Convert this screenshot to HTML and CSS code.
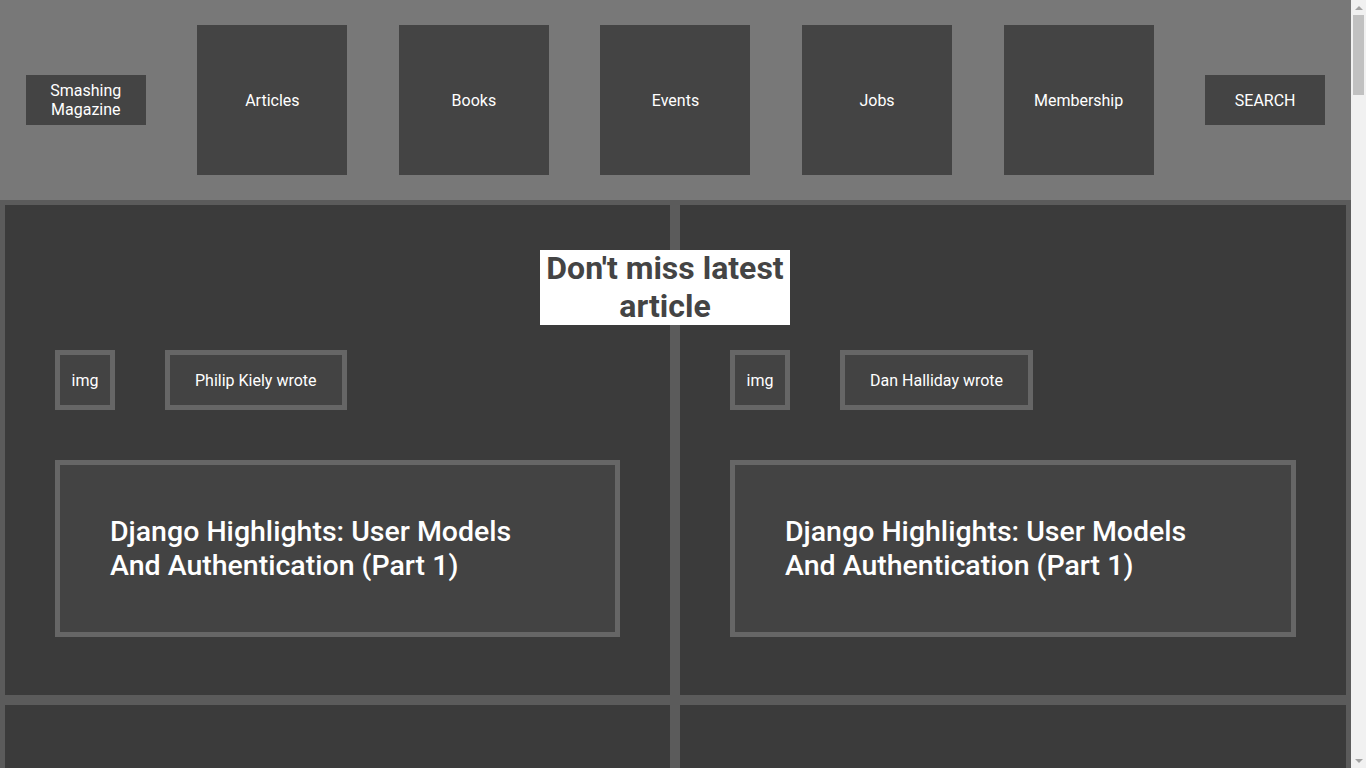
FILE: index.html
```html
<!DOCTYPE html>
<html lang="en">
<head>
<meta charset="utf-8">
<title>Smashing Magazine</title>
<link rel="stylesheet" href="styles.css">
</head>
<body>
<header class="site-header">
  <div class="logo">Smashing Magazine</div>
  <a class="nav-item" href="#">Articles</a>
  <a class="nav-item" href="#">Books</a>
  <a class="nav-item" href="#">Events</a>
  <a class="nav-item" href="#">Jobs</a>
  <a class="nav-item" href="#">Membership</a>
  <div class="search">SEARCH</div>
</header>
<main class="articles">
  <h1 class="headline">Don't miss latest article</h1>
  <article class="card"><div class="meta"><div class="avatar">img</div><div class="author">Philip Kiely wrote</div></div><div class="title-box"><h2 class="title">Django Highlights: User Models And Authentication (Part 1)</h2></div></article>
  <article class="card"><div class="meta"><div class="avatar">img</div><div class="author">Dan Halliday wrote</div></div><div class="title-box"><h2 class="title">Django Highlights: User Models And Authentication (Part 1)</h2></div></article>
  <article class="card"><div class="meta"><div class="avatar">img</div><div class="author">Philip Kiely wrote</div></div><div class="title-box"><h2 class="title">Django Highlights: User Models And Authentication (Part 1)</h2></div></article>
  <article class="card"><div class="meta"><div class="avatar">img</div><div class="author">Dan Halliday wrote</div></div><div class="title-box"><h2 class="title">Django Highlights: User Models And Authentication (Part 1)</h2></div></article>
  <article class="card"><div class="meta"><div class="avatar">img</div><div class="author">Philip Kiely wrote</div></div><div class="title-box"><h2 class="title">Django Highlights: User Models And Authentication (Part 1)</h2></div></article>
  <article class="card"><div class="meta"><div class="avatar">img</div><div class="author">Dan Halliday wrote</div></div><div class="title-box"><h2 class="title">Django Highlights: User Models And Authentication (Part 1)</h2></div></article>
  <article class="card"><div class="meta"><div class="avatar">img</div><div class="author">Philip Kiely wrote</div></div><div class="title-box"><h2 class="title">Django Highlights: User Models And Authentication (Part 1)</h2></div></article>
  <article class="card"><div class="meta"><div class="avatar">img</div><div class="author">Dan Halliday wrote</div></div><div class="title-box"><h2 class="title">Django Highlights: User Models And Authentication (Part 1)</h2></div></article>
  <article class="card"><div class="meta"><div class="avatar">img</div><div class="author">Philip Kiely wrote</div></div><div class="title-box"><h2 class="title">Django Highlights: User Models And Authentication (Part 1)</h2></div></article>
  <article class="card"><div class="meta"><div class="avatar">img</div><div class="author">Dan Halliday wrote</div></div><div class="title-box"><h2 class="title">Django Highlights: User Models And Authentication (Part 1)</h2></div></article>
  <article class="card"><div class="meta"><div class="avatar">img</div><div class="author">Philip Kiely wrote</div></div><div class="title-box"><h2 class="title">Django Highlights: User Models And Authentication (Part 1)</h2></div></article>
  <article class="card"><div class="meta"><div class="avatar">img</div><div class="author">Dan Halliday wrote</div></div><div class="title-box"><h2 class="title">Django Highlights: User Models And Authentication (Part 1)</h2></div></article>
  <article class="card"><div class="meta"><div class="avatar">img</div><div class="author">Philip Kiely wrote</div></div><div class="title-box"><h2 class="title">Django Highlights: User Models And Authentication (Part 1)</h2></div></article>
  <article class="card"><div class="meta"><div class="avatar">img</div><div class="author">Dan Halliday wrote</div></div><div class="title-box"><h2 class="title">Django Highlights: User Models And Authentication (Part 1)</h2></div></article>
  <article class="card"><div class="meta"><div class="avatar">img</div><div class="author">Philip Kiely wrote</div></div><div class="title-box"><h2 class="title">Django Highlights: User Models And Authentication (Part 1)</h2></div></article>
  <article class="card"><div class="meta"><div class="avatar">img</div><div class="author">Dan Halliday wrote</div></div><div class="title-box"><h2 class="title">Django Highlights: User Models And Authentication (Part 1)</h2></div></article>
  <article class="card"><div class="meta"><div class="avatar">img</div><div class="author">Philip Kiely wrote</div></div><div class="title-box"><h2 class="title">Django Highlights: User Models And Authentication (Part 1)</h2></div></article>
  <article class="card"><div class="meta"><div class="avatar">img</div><div class="author">Dan Halliday wrote</div></div><div class="title-box"><h2 class="title">Django Highlights: User Models And Authentication (Part 1)</h2></div></article>
  <article class="card"><div class="meta"><div class="avatar">img</div><div class="author">Philip Kiely wrote</div></div><div class="title-box"><h2 class="title">Django Highlights: User Models And Authentication (Part 1)</h2></div></article>
  <article class="card"><div class="meta"><div class="avatar">img</div><div class="author">Dan Halliday wrote</div></div><div class="title-box"><h2 class="title">Django Highlights: User Models And Authentication (Part 1)</h2></div></article>
  <article class="card"><div class="meta"><div class="avatar">img</div><div class="author">Philip Kiely wrote</div></div><div class="title-box"><h2 class="title">Django Highlights: User Models And Authentication (Part 1)</h2></div></article>
  <article class="card"><div class="meta"><div class="avatar">img</div><div class="author">Dan Halliday wrote</div></div><div class="title-box"><h2 class="title">Django Highlights: User Models And Authentication (Part 1)</h2></div></article>
  <article class="card"><div class="meta"><div class="avatar">img</div><div class="author">Philip Kiely wrote</div></div><div class="title-box"><h2 class="title">Django Highlights: User Models And Authentication (Part 1)</h2></div></article>
  <article class="card"><div class="meta"><div class="avatar">img</div><div class="author">Dan Halliday wrote</div></div><div class="title-box"><h2 class="title">Django Highlights: User Models And Authentication (Part 1)</h2></div></article>
  <article class="card"><div class="meta"><div class="avatar">img</div><div class="author">Philip Kiely wrote</div></div><div class="title-box"><h2 class="title">Django Highlights: User Models And Authentication (Part 1)</h2></div></article>
  <article class="card"><div class="meta"><div class="avatar">img</div><div class="author">Dan Halliday wrote</div></div><div class="title-box"><h2 class="title">Django Highlights: User Models And Authentication (Part 1)</h2></div></article>
  <article class="card"><div class="meta"><div class="avatar">img</div><div class="author">Philip Kiely wrote</div></div><div class="title-box"><h2 class="title">Django Highlights: User Models And Authentication (Part 1)</h2></div></article>
  <article class="card"><div class="meta"><div class="avatar">img</div><div class="author">Dan Halliday wrote</div></div><div class="title-box"><h2 class="title">Django Highlights: User Models And Authentication (Part 1)</h2></div></article>
</main>
<div class="scrollbar" aria-hidden="true">
  <div class="scroll-up"></div>
  <div class="scroll-thumb"></div>
  <div class="scroll-down"></div>
</div>
</body>
</html>
```
FILE: styles.css
```css
* { box-sizing: border-box; }

html, body {
  margin: 0;
  padding: 0;
}

body {
  margin-right: 15px;
  font-family: Roboto, "Liberation Sans", sans-serif;
  font-size: 16px;
  color: #fff;
  background: #5b5b5b;
}

.site-header {
  display: flex;
  justify-content: space-around;
  align-items: center;
  height: 200px;
  padding: 25px 0;
  background: #787878;
}

.logo,
.search,
.nav-item {
  display: flex;
  align-items: center;
  justify-content: center;
  text-align: center;
  background: #444;
  color: #fff;
  text-decoration: none;
  line-height: 19px;
}

.logo,
.search {
  width: 120px;
  height: 50px;
}

.nav-item {
  width: 150px;
  height: 150px;
}

.articles {
  position: relative;
  display: grid;
  grid-template-columns: 665px 1fr;
  gap: 10px;
  padding: 5px;
  background: #5b5b5b;
}

.headline {
  position: absolute;
  top: 50px;
  left: 540px;
  width: 250px;
  margin: 0;
  background: #fff;
  color: #444;
  font-size: 32px;
  font-weight: 700;
  line-height: 37.5px;
  text-align: center;
  z-index: 1;
}

.card {
  height: 490px;
  padding: 145px 50px 0;
  background: #3b3b3b;
}

.meta {
  display: flex;
  gap: 50px;
  margin-bottom: 50px;
}

.avatar,
.author,
.title-box {
  border: 5px solid #666;
  background: #434343;
}

.avatar,
.author {
  display: flex;
  align-items: center;
  justify-content: center;
  height: 60px;
}

.avatar {
  width: 60px;
}

.author {
  padding: 0 25px;
}

.title-box {
  padding: 50px;
  height: 177px;
}

.title {
  max-width: 430px;
  margin: 0;
  font-size: 28.5px;
  font-weight: 500;
  line-height: 33.5px;
}

/* visual replica of the browser's vertical scrollbar */
.scrollbar {
  position: fixed;
  top: 0;
  right: 0;
  width: 15px;
  height: 100vh;
  background: #f1f1f1;
  display: flex;
  flex-direction: column;
  align-items: center;
}

.scroll-up,
.scroll-down {
  width: 15px;
  height: 15px;
  display: flex;
  align-items: center;
  justify-content: center;
}

.scroll-up::before,
.scroll-down::before {
  content: "";
  width: 0;
  height: 0;
  border-left: 4px solid transparent;
  border-right: 4px solid transparent;
}

.scroll-up::before {
  border-bottom: 4px solid #a3a3a3;
}

.scroll-down::before {
  border-top: 4px solid #a3a3a3;
}

.scroll-thumb {
  width: 11px;
  height: 80px;
  background: #c1c1c1;
}

.scroll-down {
  margin-top: auto;
}
```
